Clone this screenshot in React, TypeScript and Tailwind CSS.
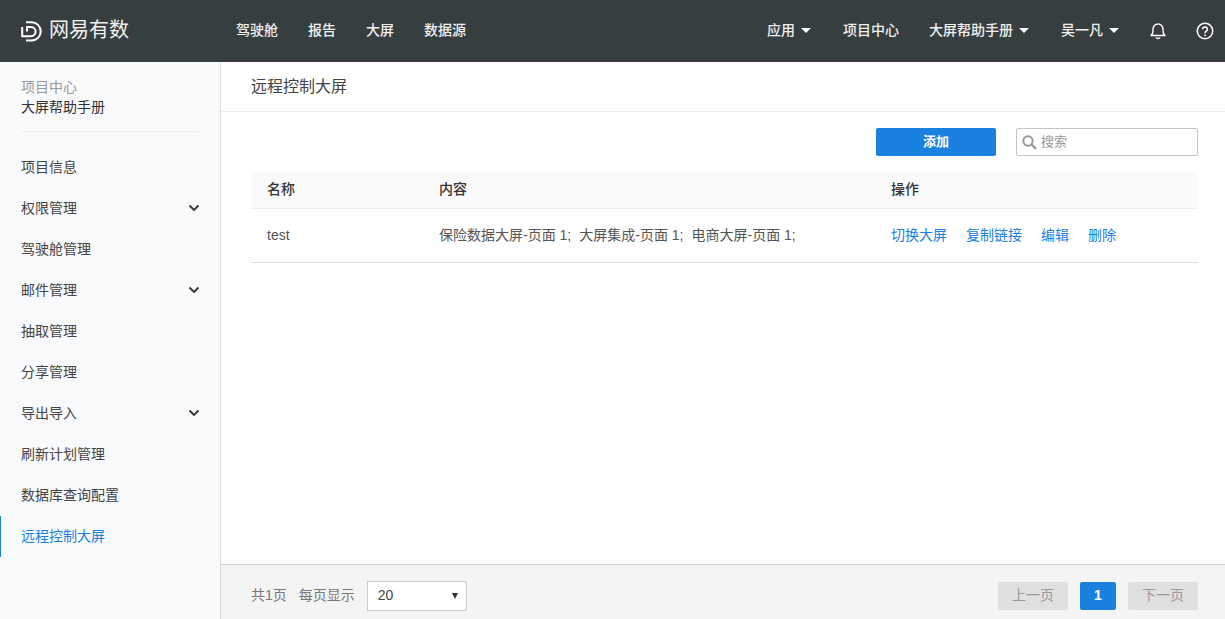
import React from "react";

const FONT = "font-['Liberation_Sans','Noto_Sans_CJK_SC',sans-serif]";

function Caret({ className = "" }: { className?: string }) {
  return <span className={`inline-block w-0 h-0 border-x-[5px] border-x-transparent border-t-[5px] border-t-white ${className}`} />;
}

function Chevron() {
  return (
    <svg width="12" height="8" viewBox="0 0 12 8" fill="none" stroke="#333" strokeWidth="1.8" className="mr-[20px] mb-[2px]">
      <path d="M1.5 1.5 6 6l4.5-4.5" />
    </svg>
  );
}

const side: [string, boolean][] = [
  ["项目信息", false],
  ["权限管理", true],
  ["驾驶舱管理", false],
  ["邮件管理", true],
  ["抽取管理", false],
  ["分享管理", false],
  ["导出导入", true],
  ["刷新计划管理", false],
  ["数据库查询配置", false],
];

export default function App() {
  return (
    <div className={`${FONT} w-[1225px] h-[619px] flex flex-col overflow-hidden bg-white text-[14px] text-[#333]`}>
      <header className="h-[62px] shrink-0 bg-[#373e40] flex items-center pb-[2px] text-white">
        <div className="w-[235px] shrink-0 flex items-center pl-[21px] gap-[7px]">
          <svg width="21" height="21" viewBox="0 0 21 21" fill="none" stroke="#fff" strokeWidth="2" className="mt-[2px]">
            <path d="M5 1.200H10.500A9.200 9.200 0 0 1 10.500 19.600H5" />
            <path d="M1.200 6V15.200H10A4.600 4.600 0 0 0 10 6H6V10.500" />
          </svg>
          <span className="text-[20px] leading-[30px] text-[#f2f2f2]">网易有数</span>
        </div>
        <nav className="flex gap-[30px] ml-[1px] font-medium text-[#f0f0f0]">
          <span>驾驶舱</span>
          <span>报告</span>
          <span>大屏</span>
          <span>数据源</span>
        </nav>
        <div className="ml-auto flex items-center font-medium text-[#f0f0f0]">
          <span className="flex items-center gap-[6px] mr-[32px]">应用<Caret /></span>
          <span className="mr-[30px]">项目中心</span>
          <span className="flex items-center gap-[6px] mr-[32px]">大屏帮助手册<Caret /></span>
          <span className="flex items-center gap-[6px] mr-[31px]">吴一凡<Caret /></span>
          <svg width="16" height="18" viewBox="0 0 16 18" fill="none" stroke="#fff" strokeWidth="1.4" className="mr-[30px] mt-[2px]">
            <path d="M1 13.500c1.400-1.200 2-2.400 2-4.500V7a5 5 0 0 1 10 0v2c0 2.100.6 3.300 2 4.500z" strokeLinejoin="round" />
            <path d="M6 15.500c.5 1.300 3.500 1.300 4 0" />
          </svg>
          <svg width="18" height="18" viewBox="0 0 18 18" fill="none" stroke="#fff" className="mr-[11px] mt-[2px]">
            <circle cx="9" cy="9" r="7.700" strokeWidth="1.500" />
            <path d="M6.600 7.200a2.400 2.300 0 1 1 3.700 2c-.9.600-1.300 1-1.300 2" strokeWidth="1.500" />
            <circle cx="9" cy="13.300" r=".9" fill="#fff" stroke="none" />
          </svg>
        </div>
      </header>

      <div className="flex-1 flex min-h-0">
        <aside className="w-[221px] shrink-0 bg-[#f9fafc] border-r border-[#dcdcdc]">
          <div className="mx-[21px] mr-[22px] pt-[15px] h-[70px] border-b border-[#eeeeee]">
            <div className="leading-[20px] text-[#999]">项目中心</div>
            <div className="leading-[20px] text-[#333]">大屏帮助手册</div>
          </div>
          <div className="mt-[15px]">
            {side.map(([t, c]) => (
              <div key={t} className="h-[41px] pl-[21px] flex items-center justify-between text-[#444]">
                <span>{t}</span>
                {c && <Chevron />}
              </div>
            ))}
            <div className="h-[41px] pl-[20px] flex items-center border-l-[1px] border-[#1a81e0] text-[#1a81e0]">远程控制大屏</div>
          </div>
        </aside>

        <main className="flex-1 min-w-0 flex flex-col">
          <div className="h-[50px] shrink-0 pl-[30px] flex items-center border-b border-[#eeeeee] text-[16px] leading-[50px] text-[#444]">
            远程控制大屏
          </div>
          <div className="flex-1 px-[27px] pl-[30px] pt-[16px]">
            <div className="flex justify-end gap-[20px]">
              <button className="w-[120px] h-[28px] rounded-[2px] bg-[#1a81e0] text-white text-[13px] font-bold">添加</button>
              <div className="w-[182px] h-[28px] rounded-[2px] border border-[#c4c4c4] flex items-center pl-[5px] gap-[4px] text-[13px] text-[#999]">
                <svg width="15" height="15" viewBox="0 0 15 15" fill="none" stroke="#999" strokeWidth="2">
                  <circle cx="6" cy="6" r="4.700" />
                  <path d="m9.500 9.500 4.500 4.500" strokeWidth="2.400" />
                </svg>
                <span>搜索</span>
              </div>
            </div>
            <div className="mt-[16px] h-[37px] bg-[#fafafa] border-b border-[#eeeeee] flex items-center pb-[2px] font-medium text-[14px] text-[#333]">
              <div className="w-[172px] pl-[16px]">名称</div>
              <div className="w-[452px] pl-[16px]">内容</div>
              <div className="pl-[16px]">操作</div>
            </div>
            <div className="h-[54px] border-b border-[#dedede] flex items-center text-[14px] text-[#555]">
              <div className="w-[172px] pl-[16px]">test</div>
              <div className="w-[452px] pl-[16px] flex gap-[8px]">
                <span>保险数据大屏-页面 1;</span>
                <span>大屏集成-页面 1;</span>
                <span>电商大屏-页面 1;</span>
              </div>
              <div className="pl-[16px] flex gap-[19px] text-[#1a81e0]">
                <span>切换大屏</span>
                <span>复制链接</span>
                <span>编辑</span>
                <span>删除</span>
              </div>
            </div>
          </div>
          <footer className="h-[55px] shrink-0 bg-[#f4f4f4] border-t border-[#cfcfcf] flex items-center pt-[7px] pl-[30px] pr-[27px] text-[14px] text-[#666]">
            <span className="text-[#777]">共1页</span>
            <span className="ml-[12px] text-[#777]">每页显示</span>
            <div className="ml-[12px] w-[100px] h-[30px] bg-white border border-[#cccccc] flex items-center justify-between pl-[10px] pr-[8px] text-[#444]">
              <span>20</span>
              <span className="w-0 h-0 border-x-[3.500px] border-x-transparent border-t-[6px] border-t-[#333]" />
            </div>
            <div className="ml-auto flex gap-[12px]">
              <div className="w-[70px] h-[28px] rounded-[2px] bg-[#e0e0e0] flex items-center justify-center text-[#999]">上一页</div>
              <div className="w-[36px] h-[28px] rounded-[2px] bg-[#1a81e0] flex items-center justify-center text-white font-bold">1</div>
              <div className="w-[70px] h-[28px] rounded-[2px] bg-[#e0e0e0] flex items-center justify-center text-[#999]">下一页</div>
            </div>
          </footer>
        </main>
      </div>
    </div>
  );
}
